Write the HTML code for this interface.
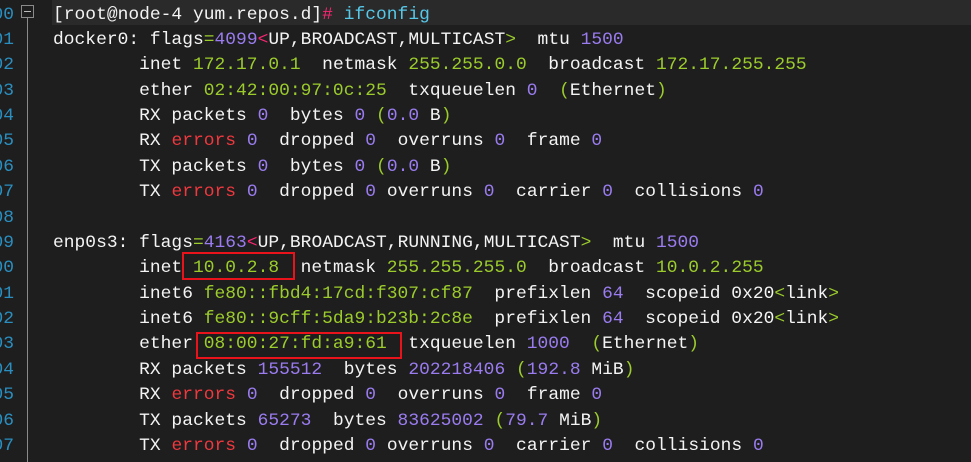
<!DOCTYPE html>
<html><head><meta charset="utf-8"><style>
html,body{margin:0;padding:0;background:#1e1e1e;width:971px;height:462px;overflow:hidden}
.w{position:relative;width:971px;height:462px;font-family:"Liberation Mono",monospace;font-size:17.9px;letter-spacing:0.03px;color:#f4f4f4}
.t{position:absolute;left:0;top:2.5px;width:971px;height:462px}
.l{position:absolute;left:53px;height:25.38px;line-height:25.38px;white-space:pre}
.n{position:absolute;right:957px;height:25.38px;line-height:25.38px;color:#2a8fc0;white-space:pre;text-align:right}
.g{color:#9ccc2c}.p{color:#9a7cf0}.r{color:#f0383e}.k{color:#f92672}.c{color:#56c8e8}
.hl{position:absolute;left:52px;top:0;width:919px;height:25px;background:#2a2a2a}
.vl{position:absolute;left:27px;top:18px;width:1px;height:444px;background:#8a8a8a}
.fb{position:absolute;left:21px;top:5px;width:11px;height:11px;border:1px solid #8a8a8a}
.fb:after{content:"";position:absolute;left:2px;top:5px;width:7px;height:1px;background:#bbb}
.box{position:absolute;border:2.5px solid #e8131b;box-sizing:border-box}
</style></head><body><div class="w">
<div class="hl"></div>
<div class="vl"></div><div class="fb"></div>
<div class="t">
<div class="n" style="top:0">00</div>
<div class="n" style="top:25.38px">01</div>
<div class="n" style="top:50.76px">02</div>
<div class="n" style="top:76.14px">03</div>
<div class="n" style="top:101.52px">04</div>
<div class="n" style="top:126.9px">05</div>
<div class="n" style="top:152.28px">06</div>
<div class="n" style="top:177.66px">07</div>
<div class="n" style="top:203.04px">08</div>
<div class="n" style="top:228.42px">09</div>
<div class="n" style="top:253.8px">00</div>
<div class="n" style="top:279.18px">01</div>
<div class="n" style="top:304.56px">02</div>
<div class="n" style="top:329.94px">03</div>
<div class="n" style="top:355.32px">04</div>
<div class="n" style="top:380.7px">05</div>
<div class="n" style="top:406.08px">06</div>
<div class="n" style="top:431.46px">07</div>

<div class="l" style="top:0">[root@node-4 yum.repos.d]<span class="k">#</span> <span class="c">ifconfig</span></div>
<div class="l" style="top:25.38px">docker0: flags<span class="g">=</span><span class="p">4099</span><span class="k">&lt;</span>UP,BROADCAST,MULTICAST<span class="g">&gt;</span>  mtu <span class="p">1500</span></div>
<div class="l" style="top:50.76px">        inet <span class="g">172.17.0.1</span>  netmask <span class="g">255.255.0.0</span>  broadcast <span class="g">172.17.255.255</span></div>
<div class="l" style="top:76.14px">        ether <span class="g">02:42:00:97:0c:25</span>  txqueuelen <span class="p">0</span>  <span class="g">(</span>Ethernet<span class="g">)</span></div>
<div class="l" style="top:101.52px">        RX packets <span class="p">0</span>  bytes <span class="p">0</span> <span class="g">(</span><span class="p">0.0</span> B<span class="g">)</span></div>
<div class="l" style="top:126.9px">        RX <span class="r">errors</span> <span class="p">0</span>  dropped <span class="p">0</span>  overruns <span class="p">0</span>  frame <span class="p">0</span></div>
<div class="l" style="top:152.28px">        TX packets <span class="p">0</span>  bytes <span class="p">0</span> <span class="g">(</span><span class="p">0.0</span> B<span class="g">)</span></div>
<div class="l" style="top:177.66px">        TX <span class="r">errors</span> <span class="p">0</span>  dropped <span class="p">0</span> overruns <span class="p">0</span>  carrier <span class="p">0</span>  collisions <span class="p">0</span></div>
<div class="l" style="top:228.42px">enp0s3: flags<span class="g">=</span><span class="p">4163</span><span class="k">&lt;</span>UP,BROADCAST,RUNNING,MULTICAST<span class="g">&gt;</span>  mtu <span class="p">1500</span></div>
<div class="l" style="top:253.8px">        inet <span class="g">10.0.2.8</span>  netmask <span class="g">255.255.255.0</span>  broadcast <span class="g">10.0.2.255</span></div>
<div class="l" style="top:279.18px">        inet6 <span class="g">fe80::fbd4:17cd:f307:cf87</span>  prefixlen <span class="p">64</span>  scopeid 0x20<span class="g">&lt;</span>link<span class="g">&gt;</span></div>
<div class="l" style="top:304.56px">        inet6 <span class="g">fe80::9cff:5da9:b23b:2c8e</span>  prefixlen <span class="p">64</span>  scopeid 0x20<span class="g">&lt;</span>link<span class="g">&gt;</span></div>
<div class="l" style="top:329.94px">        ether <span class="g">08:00:27:fd:a9:61</span>  txqueuelen <span class="p">1000</span>  <span class="g">(</span>Ethernet<span class="g">)</span></div>
<div class="l" style="top:355.32px">        RX packets <span class="p">155512</span>  bytes <span class="p">202218406</span> <span class="g">(</span><span class="p">192.8</span> MiB<span class="g">)</span></div>
<div class="l" style="top:380.7px">        RX <span class="r">errors</span> <span class="p">0</span>  dropped <span class="p">0</span>  overruns <span class="p">0</span>  frame <span class="p">0</span></div>
<div class="l" style="top:406.08px">        TX packets <span class="p">65273</span>  bytes <span class="p">83625002</span> <span class="g">(</span><span class="p">79.7</span> MiB<span class="g">)</span></div>
<div class="l" style="top:431.46px">        TX <span class="r">errors</span> <span class="p">0</span>  dropped <span class="p">0</span> overruns <span class="p">0</span>  carrier <span class="p">0</span>  collisions <span class="p">0</span></div>
</div>
<div class="box" style="left:182px;top:252px;width:113px;height:28px"></div>
<div class="box" style="left:196px;top:332px;width:206px;height:27px"></div>
</div></body></html>
